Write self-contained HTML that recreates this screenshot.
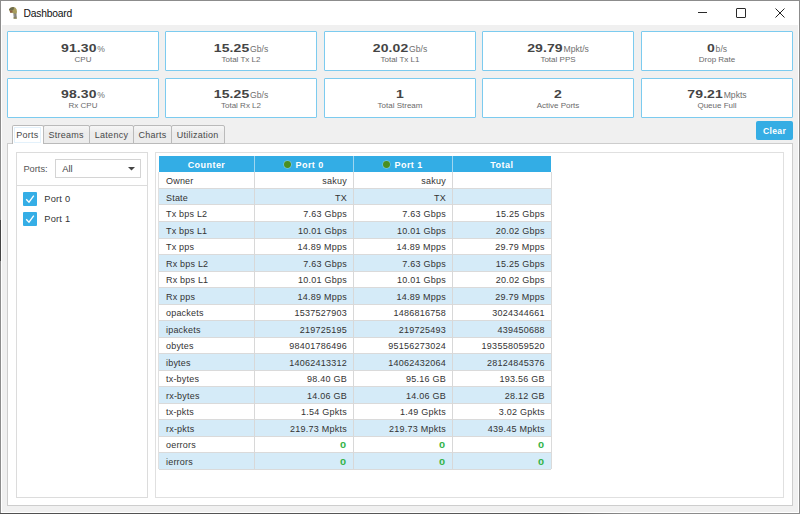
<!DOCTYPE html>
<html><head><meta charset="utf-8"><style>
html,body{margin:0;padding:0;width:800px;height:514px;overflow:hidden;background:#f0f0f0;}
body{position:relative;font-family:"Liberation Sans", sans-serif;}
.b{position:absolute;}
.t{position:absolute;white-space:nowrap;line-height:1;}
</style></head><body>
<div class="b" style="left:0px;top:0px;width:800px;height:514px;background:#f0f0f0"></div>
<div class="b" style="left:1px;top:1px;width:798px;height:24px;background:#fff"></div>
<div class="b" style="left:0px;top:0px;width:800px;height:1px;background:#8c8c8c"></div>
<div class="b" style="left:0px;top:0px;width:1px;height:514px;background:#8c8c8c"></div>
<div class="b" style="left:799px;top:0px;width:1px;height:514px;background:#8c8c8c"></div>
<div class="b" style="left:0px;top:513px;width:800px;height:1px;background:linear-gradient(90deg,#505050,#5a5a5a 70%,#8c8c8c 78%)"></div>
<div class="b" style="left:0px;top:220px;width:1px;height:41px;background:#444"></div>
<div class="b" style="left:64px;top:512px;width:3px;height:1px;background:#888"></div>
<div class="b" style="left:203px;top:512px;width:3px;height:1px;background:#888"></div>
<div class="b" style="left:278px;top:512px;width:3px;height:1px;background:#888"></div>
<div class="b" style="left:333px;top:512px;width:3px;height:1px;background:#888"></div>
<div class="b" style="left:495px;top:512px;width:3px;height:1px;background:#888"></div>
<div class="b" style="left:1px;top:25px;width:1px;height:488px;background:#fff"></div>
<div class="b" style="left:798px;top:25px;width:1px;height:488px;background:#fff"></div>
<div class="b" style="left:1px;top:512px;width:798px;height:1px;background:#fff"></div>
<svg class="b" style="left:7px;top:5px" width="12" height="15" viewBox="0 0 12 15">
<path d="M2 4.2 L3.5 2.8 L6 2 L8.2 2.4 L9.6 4.2 L10 7 L9.4 9.2 L8 9.6 L6.4 8.6 L5 7.8 L3.4 8 L2.8 6.6 Z" fill="#a79c5c"/>
<path d="M2 4.2 L3.5 2.8 L6 2 L7.2 2.6 L6.6 4.6 L5.2 5.4 L3.2 5.6 L2.2 5.2 Z" fill="#6e6c4c"/>
<path d="M2.8 5.6 L5.4 5.6 L5.6 7.2 L4.2 7.8 L3.2 7.6 Z" fill="#8c5c44"/>
<path d="M6.4 8.4 L9.4 8.8 L9.8 12.4 L8.6 13.6 L6.8 13.2 L6.6 11 Z" fill="#807f7a"/>
<path d="M7.4 9 L8.2 9 L8.2 12 L7.4 12 Z" fill="#9c9a94"/>
<path d="M6.4 12.6 L9.8 12.4 L10 13.8 L6.6 13.8 Z" fill="#8b8450"/>
</svg>
<div class="t" style="left:23.6px;top:8.58px;font-size:10.3px;color:#111;font-weight:normal;letter-spacing:-0.22px;">Dashboard</div>
<div class="b" style="left:698px;top:12px;width:8.5px;height:1.2px;background:#2a2a2a"></div>
<div class="b" style="left:736px;top:8px;width:9.5px;height:9.5px;border:1.2px solid #2a2a2a;box-sizing:border-box;border-radius:1px"></div>
<svg class="b" style="left:774px;top:7px" width="12" height="12" viewBox="0 0 12 12"><path d="M1.5 1.5 L10.5 10.5 M10.5 1.5 L1.5 10.5" stroke="#222" stroke-width="1"/></svg>
<div class="b" style="left:7px;top:31px;width:152px;height:40px;border:1px solid #7ccbef;background:#fff;box-sizing:border-box;border-radius:1px"></div>
<div class="t" style="left:7px;top:39.52px;width:152px;text-align:center;font-size:11.2px;color:#444;font-weight:bold;letter-spacing:0px;"><span style="display:inline-block;font-size:14px;line-height:1;transform:scaleY(0.84);transform-origin:50% 11.85px;letter-spacing:0.1px">91.30</span><span style="font-size:8.6px;font-weight:normal;color:#6f6f6f;letter-spacing:0;margin-left:0.8px">%</span></div>
<div class="t" style="left:7px;top:55.93px;width:152px;text-align:center;font-size:8px;color:#6a6a6a;font-weight:normal;letter-spacing:0px;">CPU</div>
<div class="b" style="left:165px;top:31px;width:152px;height:40px;border:1px solid #7ccbef;background:#fff;box-sizing:border-box;border-radius:1px"></div>
<div class="t" style="left:165px;top:39.52px;width:152px;text-align:center;font-size:11.2px;color:#444;font-weight:bold;letter-spacing:0px;"><span style="display:inline-block;font-size:14px;line-height:1;transform:scaleY(0.84);transform-origin:50% 11.85px;letter-spacing:0.1px">15.25</span><span style="font-size:8.6px;font-weight:normal;color:#6f6f6f;letter-spacing:0;margin-left:0.8px">Gb/s</span></div>
<div class="t" style="left:165px;top:55.93px;width:152px;text-align:center;font-size:8px;color:#6a6a6a;font-weight:normal;letter-spacing:0px;">Total Tx L2</div>
<div class="b" style="left:324px;top:31px;width:152px;height:40px;border:1px solid #7ccbef;background:#fff;box-sizing:border-box;border-radius:1px"></div>
<div class="t" style="left:324px;top:39.52px;width:152px;text-align:center;font-size:11.2px;color:#444;font-weight:bold;letter-spacing:0px;"><span style="display:inline-block;font-size:14px;line-height:1;transform:scaleY(0.84);transform-origin:50% 11.85px;letter-spacing:0.1px">20.02</span><span style="font-size:8.6px;font-weight:normal;color:#6f6f6f;letter-spacing:0;margin-left:0.8px">Gb/s</span></div>
<div class="t" style="left:324px;top:55.93px;width:152px;text-align:center;font-size:8px;color:#6a6a6a;font-weight:normal;letter-spacing:0px;">Total Tx L1</div>
<div class="b" style="left:482px;top:31px;width:152px;height:40px;border:1px solid #7ccbef;background:#fff;box-sizing:border-box;border-radius:1px"></div>
<div class="t" style="left:482px;top:39.52px;width:152px;text-align:center;font-size:11.2px;color:#444;font-weight:bold;letter-spacing:0px;"><span style="display:inline-block;font-size:14px;line-height:1;transform:scaleY(0.84);transform-origin:50% 11.85px;letter-spacing:0.1px">29.79</span><span style="font-size:8.6px;font-weight:normal;color:#6f6f6f;letter-spacing:0;margin-left:0.8px">Mpkt/s</span></div>
<div class="t" style="left:482px;top:55.93px;width:152px;text-align:center;font-size:8px;color:#6a6a6a;font-weight:normal;letter-spacing:0px;">Total PPS</div>
<div class="b" style="left:641px;top:31px;width:152px;height:40px;border:1px solid #7ccbef;background:#fff;box-sizing:border-box;border-radius:1px"></div>
<div class="t" style="left:641px;top:39.52px;width:152px;text-align:center;font-size:11.2px;color:#444;font-weight:bold;letter-spacing:0px;"><span style="display:inline-block;font-size:14px;line-height:1;transform:scaleY(0.84);transform-origin:50% 11.85px;letter-spacing:0.1px">0</span><span style="font-size:8.6px;font-weight:normal;color:#6f6f6f;letter-spacing:0;margin-left:0.8px">b/s</span></div>
<div class="t" style="left:641px;top:55.93px;width:152px;text-align:center;font-size:8px;color:#6a6a6a;font-weight:normal;letter-spacing:0px;">Drop Rate</div>
<div class="b" style="left:7px;top:77.6px;width:152px;height:40px;border:1px solid #7ccbef;background:#fff;box-sizing:border-box;border-radius:1px"></div>
<div class="t" style="left:7px;top:85.52px;width:152px;text-align:center;font-size:11.2px;color:#444;font-weight:bold;letter-spacing:0px;"><span style="display:inline-block;font-size:14px;line-height:1;transform:scaleY(0.84);transform-origin:50% 11.85px;letter-spacing:0.1px">98.30</span><span style="font-size:8.6px;font-weight:normal;color:#6f6f6f;letter-spacing:0;margin-left:0.8px">%</span></div>
<div class="t" style="left:7px;top:101.93px;width:152px;text-align:center;font-size:8px;color:#6a6a6a;font-weight:normal;letter-spacing:0px;">Rx CPU</div>
<div class="b" style="left:165px;top:77.6px;width:152px;height:40px;border:1px solid #7ccbef;background:#fff;box-sizing:border-box;border-radius:1px"></div>
<div class="t" style="left:165px;top:85.52px;width:152px;text-align:center;font-size:11.2px;color:#444;font-weight:bold;letter-spacing:0px;"><span style="display:inline-block;font-size:14px;line-height:1;transform:scaleY(0.84);transform-origin:50% 11.85px;letter-spacing:0.1px">15.25</span><span style="font-size:8.6px;font-weight:normal;color:#6f6f6f;letter-spacing:0;margin-left:0.8px">Gb/s</span></div>
<div class="t" style="left:165px;top:101.93px;width:152px;text-align:center;font-size:8px;color:#6a6a6a;font-weight:normal;letter-spacing:0px;">Total Rx L2</div>
<div class="b" style="left:324px;top:77.6px;width:152px;height:40px;border:1px solid #7ccbef;background:#fff;box-sizing:border-box;border-radius:1px"></div>
<div class="t" style="left:324px;top:85.52px;width:152px;text-align:center;font-size:11.2px;color:#444;font-weight:bold;letter-spacing:0px;"><span style="display:inline-block;font-size:14px;line-height:1;transform:scaleY(0.84);transform-origin:50% 11.85px;letter-spacing:0.1px">1</span></div>
<div class="t" style="left:324px;top:101.93px;width:152px;text-align:center;font-size:8px;color:#6a6a6a;font-weight:normal;letter-spacing:0px;">Total Stream</div>
<div class="b" style="left:482px;top:77.6px;width:152px;height:40px;border:1px solid #7ccbef;background:#fff;box-sizing:border-box;border-radius:1px"></div>
<div class="t" style="left:482px;top:85.52px;width:152px;text-align:center;font-size:11.2px;color:#444;font-weight:bold;letter-spacing:0px;"><span style="display:inline-block;font-size:14px;line-height:1;transform:scaleY(0.84);transform-origin:50% 11.85px;letter-spacing:0.1px">2</span></div>
<div class="t" style="left:482px;top:101.93px;width:152px;text-align:center;font-size:8px;color:#6a6a6a;font-weight:normal;letter-spacing:0px;">Active Ports</div>
<div class="b" style="left:641px;top:77.6px;width:152px;height:40px;border:1px solid #7ccbef;background:#fff;box-sizing:border-box;border-radius:1px"></div>
<div class="t" style="left:641px;top:85.52px;width:152px;text-align:center;font-size:11.2px;color:#444;font-weight:bold;letter-spacing:0px;"><span style="display:inline-block;font-size:14px;line-height:1;transform:scaleY(0.84);transform-origin:50% 11.85px;letter-spacing:0.1px">79.21</span><span style="font-size:8.6px;font-weight:normal;color:#6f6f6f;letter-spacing:0;margin-left:0.8px">Mpkts</span></div>
<div class="t" style="left:641px;top:101.93px;width:152px;text-align:center;font-size:8px;color:#6a6a6a;font-weight:normal;letter-spacing:0px;">Queue Full</div>
<div class="b" style="left:7px;top:143px;width:786px;height:362.5px;border:1px solid #cdcdcd;background:#fff;box-sizing:border-box"></div>
<div class="b" style="left:11.5px;top:124.6px;width:32.0px;height:19.4px;border:1px solid #bababa;border-bottom:none;background:#fff;box-sizing:border-box;border-radius:2px 2px 0 0"></div>
<div class="b" style="left:14px;top:127.3px;width:26.5px;height:16px;border:1px solid #e3f1fb;box-sizing:border-box"></div>
<div class="t" style="left:11.5px;top:131.18px;width:32.0px;text-align:center;font-size:9px;color:#484848;font-weight:normal;letter-spacing:0.25px;">Ports</div>
<div class="b" style="left:42.5px;top:125.2px;width:47.5px;height:18.8px;border:1px solid #bababa;background:linear-gradient(#f6f6f6,#ececec 40%);box-sizing:border-box;border-radius:2px 2px 0 0"></div>
<div class="t" style="left:42.5px;top:131.18px;width:47.5px;text-align:center;font-size:9px;color:#484848;font-weight:normal;letter-spacing:0.25px;">Streams</div>
<div class="b" style="left:89px;top:125.2px;width:45px;height:18.8px;border:1px solid #bababa;background:linear-gradient(#f6f6f6,#ececec 40%);box-sizing:border-box;border-radius:2px 2px 0 0"></div>
<div class="t" style="left:89px;top:131.18px;width:45px;text-align:center;font-size:9px;color:#484848;font-weight:normal;letter-spacing:0.25px;">Latency</div>
<div class="b" style="left:133px;top:125.2px;width:39px;height:18.8px;border:1px solid #bababa;background:linear-gradient(#f6f6f6,#ececec 40%);box-sizing:border-box;border-radius:2px 2px 0 0"></div>
<div class="t" style="left:133px;top:131.18px;width:39px;text-align:center;font-size:9px;color:#484848;font-weight:normal;letter-spacing:0.25px;">Charts</div>
<div class="b" style="left:171px;top:125.2px;width:53.5px;height:18.8px;border:1px solid #bababa;background:linear-gradient(#f6f6f6,#ececec 40%);box-sizing:border-box;border-radius:2px 2px 0 0"></div>
<div class="t" style="left:171px;top:131.18px;width:53.5px;text-align:center;font-size:9px;color:#484848;font-weight:normal;letter-spacing:0.25px;">Utilization</div>
<div class="b" style="left:756.3px;top:121.3px;width:36.5px;height:18.4px;background:#35ade4;border-radius:2px"></div>
<div class="t" style="left:756.3px;top:126.82px;width:36.5px;text-align:center;font-size:8.6px;color:#fff;font-weight:bold;letter-spacing:0.3px;">Clear</div>
<div class="b" style="left:16px;top:152px;width:131.5px;height:345.5px;border:1px solid #dcdcdc;box-sizing:border-box"></div>
<div class="b" style="left:16px;top:184.6px;width:131.5px;height:1px;background:#dcdcdc"></div>
<div class="t" style="left:23.4px;top:164.73px;font-size:9.3px;color:#555;font-weight:normal;letter-spacing:0px;">Ports:</div>
<div class="b" style="left:55.2px;top:159.4px;width:85.7px;height:18.3px;border:1px solid #d4d4d4;box-sizing:border-box;background:#fff"></div>
<div class="t" style="left:62.2px;top:164.73px;font-size:9.3px;color:#444;font-weight:normal;letter-spacing:0px;">All</div>
<svg class="b" style="left:127.5px;top:166.5px" width="7" height="4" viewBox="0 0 7 4"><path d="M0 0 L7 0 L3.5 3.5 Z" fill="#444"/></svg>
<div class="b" style="left:23.1px;top:192px;width:13.7px;height:14px;background:#35aee6;border-radius:1px"></div>
<svg class="b" style="left:23.1px;top:192px" width="14" height="14" viewBox="0 0 14 14"><path d="M3.2 7.2 L6 10.2 L10.8 3.6" stroke="#fff" stroke-width="1.3" fill="none"/></svg>
<div class="t" style="left:44.3px;top:194.93px;font-size:9.3px;color:#333;font-weight:normal;letter-spacing:0.2px;">Port 0</div>
<div class="b" style="left:23.1px;top:212.4px;width:13.7px;height:14px;background:#35aee6;border-radius:1px"></div>
<svg class="b" style="left:23.1px;top:212.4px" width="14" height="14" viewBox="0 0 14 14"><path d="M3.2 7.2 L6 10.2 L10.8 3.6" stroke="#fff" stroke-width="1.3" fill="none"/></svg>
<div class="t" style="left:44.3px;top:215.33px;font-size:9.3px;color:#333;font-weight:normal;letter-spacing:0.2px;">Port 1</div>
<div class="b" style="left:154.5px;top:152px;width:629.5px;height:345.5px;border:1px solid #e0e0e0;box-sizing:border-box"></div>
<div class="b" style="left:158.5px;top:156.1px;width:392.70000000000005px;height:15.830000000000013px;background:#33ade5"></div>
<div class="b" style="left:254.0px;top:156.1px;width:1px;height:15.830000000000013px;background:#9fd6f0"></div>
<div class="b" style="left:353.0px;top:156.1px;width:1px;height:15.830000000000013px;background:#9fd6f0"></div>
<div class="b" style="left:452.0px;top:156.1px;width:1px;height:15.830000000000013px;background:#9fd6f0"></div>
<div class="t" style="left:158.5px;top:160.58px;width:96.0px;text-align:center;font-size:9px;color:#fff;font-weight:bold;letter-spacing:0.45px;">Counter</div>
<div class="t" style="left:254.5px;top:160.58px;width:99.0px;text-align:center;font-size:9px;color:#fff;font-weight:bold;letter-spacing:0.45px;"><span style="display:inline-block;width:6.8px;height:6.8px;border-radius:50%;background:#4a8f22;box-shadow:0 0 0 0.5px rgba(230,240,210,0.55);margin-right:4.4px;vertical-align:-0.3px"></span>Port 0</div>
<div class="t" style="left:353.5px;top:160.58px;width:99.0px;text-align:center;font-size:9px;color:#fff;font-weight:bold;letter-spacing:0.45px;"><span style="display:inline-block;width:6.8px;height:6.8px;border-radius:50%;background:#4a8f22;box-shadow:0 0 0 0.5px rgba(230,240,210,0.55);margin-right:4.4px;vertical-align:-0.3px"></span>Port 1</div>
<div class="t" style="left:452.5px;top:160.58px;width:98.70000000000005px;text-align:center;font-size:9px;color:#fff;font-weight:bold;letter-spacing:0.45px;">Total</div>
<div class="b" style="left:158.5px;top:171.93px;width:392.70000000000005px;height:16.53px;background:#fff"></div>
<div class="b" style="left:158.5px;top:188.46px;width:392.70000000000005px;height:16.53px;background:#d5ebf8"></div>
<div class="b" style="left:158.5px;top:204.99px;width:392.70000000000005px;height:16.53px;background:#fff"></div>
<div class="b" style="left:158.5px;top:221.52px;width:392.70000000000005px;height:16.53px;background:#d5ebf8"></div>
<div class="b" style="left:158.5px;top:238.05px;width:392.70000000000005px;height:16.53px;background:#fff"></div>
<div class="b" style="left:158.5px;top:254.58px;width:392.70000000000005px;height:16.53px;background:#d5ebf8"></div>
<div class="b" style="left:158.5px;top:271.11px;width:392.70000000000005px;height:16.53px;background:#fff"></div>
<div class="b" style="left:158.5px;top:287.64px;width:392.70000000000005px;height:16.53px;background:#d5ebf8"></div>
<div class="b" style="left:158.5px;top:304.17px;width:392.70000000000005px;height:16.53px;background:#fff"></div>
<div class="b" style="left:158.5px;top:320.70000000000005px;width:392.70000000000005px;height:16.53px;background:#d5ebf8"></div>
<div class="b" style="left:158.5px;top:337.23px;width:392.70000000000005px;height:16.53px;background:#fff"></div>
<div class="b" style="left:158.5px;top:353.76px;width:392.70000000000005px;height:16.53px;background:#d5ebf8"></div>
<div class="b" style="left:158.5px;top:370.29px;width:392.70000000000005px;height:16.53px;background:#fff"></div>
<div class="b" style="left:158.5px;top:386.82000000000005px;width:392.70000000000005px;height:16.53px;background:#d5ebf8"></div>
<div class="b" style="left:158.5px;top:403.35px;width:392.70000000000005px;height:16.53px;background:#fff"></div>
<div class="b" style="left:158.5px;top:419.88px;width:392.70000000000005px;height:16.53px;background:#d5ebf8"></div>
<div class="b" style="left:158.5px;top:436.40999999999997px;width:392.70000000000005px;height:16.53px;background:#fff"></div>
<div class="b" style="left:158.5px;top:452.94000000000005px;width:392.70000000000005px;height:16.53px;background:#d5ebf8"></div>
<div class="b" style="left:158.5px;top:187.96px;width:392.70000000000005px;height:1px;background:#dadada"></div>
<div class="b" style="left:158.5px;top:204.49px;width:392.70000000000005px;height:1px;background:#dadada"></div>
<div class="b" style="left:158.5px;top:221.02px;width:392.70000000000005px;height:1px;background:#dadada"></div>
<div class="b" style="left:158.5px;top:237.55px;width:392.70000000000005px;height:1px;background:#dadada"></div>
<div class="b" style="left:158.5px;top:254.08px;width:392.70000000000005px;height:1px;background:#dadada"></div>
<div class="b" style="left:158.5px;top:270.61px;width:392.70000000000005px;height:1px;background:#dadada"></div>
<div class="b" style="left:158.5px;top:287.14px;width:392.70000000000005px;height:1px;background:#dadada"></div>
<div class="b" style="left:158.5px;top:303.66999999999996px;width:392.70000000000005px;height:1px;background:#dadada"></div>
<div class="b" style="left:158.5px;top:320.20000000000005px;width:392.70000000000005px;height:1px;background:#dadada"></div>
<div class="b" style="left:158.5px;top:336.73px;width:392.70000000000005px;height:1px;background:#dadada"></div>
<div class="b" style="left:158.5px;top:353.26px;width:392.70000000000005px;height:1px;background:#dadada"></div>
<div class="b" style="left:158.5px;top:369.78999999999996px;width:392.70000000000005px;height:1px;background:#dadada"></div>
<div class="b" style="left:158.5px;top:386.32000000000005px;width:392.70000000000005px;height:1px;background:#dadada"></div>
<div class="b" style="left:158.5px;top:402.85px;width:392.70000000000005px;height:1px;background:#dadada"></div>
<div class="b" style="left:158.5px;top:419.38px;width:392.70000000000005px;height:1px;background:#dadada"></div>
<div class="b" style="left:158.5px;top:435.90999999999997px;width:392.70000000000005px;height:1px;background:#dadada"></div>
<div class="b" style="left:158.5px;top:452.43999999999994px;width:392.70000000000005px;height:1px;background:#dadada"></div>
<div class="b" style="left:158.5px;top:468.97px;width:392.70000000000005px;height:1px;background:#dadada"></div>
<div class="b" style="left:254.0px;top:171.93px;width:1px;height:297.54px;background:#d8d8d8"></div>
<div class="b" style="left:353.0px;top:171.93px;width:1px;height:297.54px;background:#d8d8d8"></div>
<div class="b" style="left:452.0px;top:171.93px;width:1px;height:297.54px;background:#d8d8d8"></div>
<div class="b" style="left:158.0px;top:171.93px;width:1px;height:297.54px;background:#e0e0e0"></div>
<div class="b" style="left:550.7px;top:171.93px;width:1px;height:297.54px;background:#dadada"></div>
<div class="t" style="left:166.0px;top:177.01px;font-size:9px;color:#333;font-weight:normal;letter-spacing:0.2px;">Owner</div>
<div class="t" style="left:254.5px;top:177.01px;width:92.5px;text-align:right;font-size:9px;color:#333;font-weight:normal;letter-spacing:0.25px;margin-right:-0.25px">sakuy</div>
<div class="t" style="left:353.5px;top:177.01px;width:92.5px;text-align:right;font-size:9px;color:#333;font-weight:normal;letter-spacing:0.25px;margin-right:-0.25px">sakuy</div>
<div class="t" style="left:452.5px;top:177.01px;width:92.20000000000005px;text-align:right;font-size:9px;color:#333;font-weight:normal;letter-spacing:0.25px;margin-right:-0.25px"></div>
<div class="t" style="left:166.0px;top:193.54px;font-size:9px;color:#333;font-weight:normal;letter-spacing:0.2px;">State</div>
<div class="t" style="left:254.5px;top:193.54px;width:92.5px;text-align:right;font-size:9px;color:#333;font-weight:normal;letter-spacing:0.25px;margin-right:-0.25px">TX</div>
<div class="t" style="left:353.5px;top:193.54px;width:92.5px;text-align:right;font-size:9px;color:#333;font-weight:normal;letter-spacing:0.25px;margin-right:-0.25px">TX</div>
<div class="t" style="left:452.5px;top:193.54px;width:92.20000000000005px;text-align:right;font-size:9px;color:#333;font-weight:normal;letter-spacing:0.25px;margin-right:-0.25px"></div>
<div class="t" style="left:166.0px;top:210.07px;font-size:9px;color:#333;font-weight:normal;letter-spacing:0.2px;">Tx bps L2</div>
<div class="t" style="left:254.5px;top:210.07px;width:92.5px;text-align:right;font-size:9px;color:#333;font-weight:normal;letter-spacing:0.25px;margin-right:-0.25px">7.63 Gbps</div>
<div class="t" style="left:353.5px;top:210.07px;width:92.5px;text-align:right;font-size:9px;color:#333;font-weight:normal;letter-spacing:0.25px;margin-right:-0.25px">7.63 Gbps</div>
<div class="t" style="left:452.5px;top:210.07px;width:92.20000000000005px;text-align:right;font-size:9px;color:#333;font-weight:normal;letter-spacing:0.25px;margin-right:-0.25px">15.25 Gbps</div>
<div class="t" style="left:166.0px;top:226.60px;font-size:9px;color:#333;font-weight:normal;letter-spacing:0.2px;">Tx bps L1</div>
<div class="t" style="left:254.5px;top:226.60px;width:92.5px;text-align:right;font-size:9px;color:#333;font-weight:normal;letter-spacing:0.25px;margin-right:-0.25px">10.01 Gbps</div>
<div class="t" style="left:353.5px;top:226.60px;width:92.5px;text-align:right;font-size:9px;color:#333;font-weight:normal;letter-spacing:0.25px;margin-right:-0.25px">10.01 Gbps</div>
<div class="t" style="left:452.5px;top:226.60px;width:92.20000000000005px;text-align:right;font-size:9px;color:#333;font-weight:normal;letter-spacing:0.25px;margin-right:-0.25px">20.02 Gbps</div>
<div class="t" style="left:166.0px;top:243.13px;font-size:9px;color:#333;font-weight:normal;letter-spacing:0.2px;">Tx pps</div>
<div class="t" style="left:254.5px;top:243.13px;width:92.5px;text-align:right;font-size:9px;color:#333;font-weight:normal;letter-spacing:0.25px;margin-right:-0.25px">14.89 Mpps</div>
<div class="t" style="left:353.5px;top:243.13px;width:92.5px;text-align:right;font-size:9px;color:#333;font-weight:normal;letter-spacing:0.25px;margin-right:-0.25px">14.89 Mpps</div>
<div class="t" style="left:452.5px;top:243.13px;width:92.20000000000005px;text-align:right;font-size:9px;color:#333;font-weight:normal;letter-spacing:0.25px;margin-right:-0.25px">29.79 Mpps</div>
<div class="t" style="left:166.0px;top:259.66px;font-size:9px;color:#333;font-weight:normal;letter-spacing:0.2px;">Rx bps L2</div>
<div class="t" style="left:254.5px;top:259.66px;width:92.5px;text-align:right;font-size:9px;color:#333;font-weight:normal;letter-spacing:0.25px;margin-right:-0.25px">7.63 Gbps</div>
<div class="t" style="left:353.5px;top:259.66px;width:92.5px;text-align:right;font-size:9px;color:#333;font-weight:normal;letter-spacing:0.25px;margin-right:-0.25px">7.63 Gbps</div>
<div class="t" style="left:452.5px;top:259.66px;width:92.20000000000005px;text-align:right;font-size:9px;color:#333;font-weight:normal;letter-spacing:0.25px;margin-right:-0.25px">15.25 Gbps</div>
<div class="t" style="left:166.0px;top:276.19px;font-size:9px;color:#333;font-weight:normal;letter-spacing:0.2px;">Rx bps L1</div>
<div class="t" style="left:254.5px;top:276.19px;width:92.5px;text-align:right;font-size:9px;color:#333;font-weight:normal;letter-spacing:0.25px;margin-right:-0.25px">10.01 Gbps</div>
<div class="t" style="left:353.5px;top:276.19px;width:92.5px;text-align:right;font-size:9px;color:#333;font-weight:normal;letter-spacing:0.25px;margin-right:-0.25px">10.01 Gbps</div>
<div class="t" style="left:452.5px;top:276.19px;width:92.20000000000005px;text-align:right;font-size:9px;color:#333;font-weight:normal;letter-spacing:0.25px;margin-right:-0.25px">20.02 Gbps</div>
<div class="t" style="left:166.0px;top:292.72px;font-size:9px;color:#333;font-weight:normal;letter-spacing:0.2px;">Rx pps</div>
<div class="t" style="left:254.5px;top:292.72px;width:92.5px;text-align:right;font-size:9px;color:#333;font-weight:normal;letter-spacing:0.25px;margin-right:-0.25px">14.89 Mpps</div>
<div class="t" style="left:353.5px;top:292.72px;width:92.5px;text-align:right;font-size:9px;color:#333;font-weight:normal;letter-spacing:0.25px;margin-right:-0.25px">14.89 Mpps</div>
<div class="t" style="left:452.5px;top:292.72px;width:92.20000000000005px;text-align:right;font-size:9px;color:#333;font-weight:normal;letter-spacing:0.25px;margin-right:-0.25px">29.79 Mpps</div>
<div class="t" style="left:166.0px;top:309.25px;font-size:9px;color:#333;font-weight:normal;letter-spacing:0.2px;">opackets</div>
<div class="t" style="left:254.5px;top:309.25px;width:92.5px;text-align:right;font-size:9px;color:#333;font-weight:normal;letter-spacing:0.25px;margin-right:-0.25px">1537527903</div>
<div class="t" style="left:353.5px;top:309.25px;width:92.5px;text-align:right;font-size:9px;color:#333;font-weight:normal;letter-spacing:0.25px;margin-right:-0.25px">1486816758</div>
<div class="t" style="left:452.5px;top:309.25px;width:92.20000000000005px;text-align:right;font-size:9px;color:#333;font-weight:normal;letter-spacing:0.25px;margin-right:-0.25px">3024344661</div>
<div class="t" style="left:166.0px;top:325.78px;font-size:9px;color:#333;font-weight:normal;letter-spacing:0.2px;">ipackets</div>
<div class="t" style="left:254.5px;top:325.78px;width:92.5px;text-align:right;font-size:9px;color:#333;font-weight:normal;letter-spacing:0.25px;margin-right:-0.25px">219725195</div>
<div class="t" style="left:353.5px;top:325.78px;width:92.5px;text-align:right;font-size:9px;color:#333;font-weight:normal;letter-spacing:0.25px;margin-right:-0.25px">219725493</div>
<div class="t" style="left:452.5px;top:325.78px;width:92.20000000000005px;text-align:right;font-size:9px;color:#333;font-weight:normal;letter-spacing:0.25px;margin-right:-0.25px">439450688</div>
<div class="t" style="left:166.0px;top:342.31px;font-size:9px;color:#333;font-weight:normal;letter-spacing:0.2px;">obytes</div>
<div class="t" style="left:254.5px;top:342.31px;width:92.5px;text-align:right;font-size:9px;color:#333;font-weight:normal;letter-spacing:0.25px;margin-right:-0.25px">98401786496</div>
<div class="t" style="left:353.5px;top:342.31px;width:92.5px;text-align:right;font-size:9px;color:#333;font-weight:normal;letter-spacing:0.25px;margin-right:-0.25px">95156273024</div>
<div class="t" style="left:452.5px;top:342.31px;width:92.20000000000005px;text-align:right;font-size:9px;color:#333;font-weight:normal;letter-spacing:0.25px;margin-right:-0.25px">193558059520</div>
<div class="t" style="left:166.0px;top:358.84px;font-size:9px;color:#333;font-weight:normal;letter-spacing:0.2px;">ibytes</div>
<div class="t" style="left:254.5px;top:358.84px;width:92.5px;text-align:right;font-size:9px;color:#333;font-weight:normal;letter-spacing:0.25px;margin-right:-0.25px">14062413312</div>
<div class="t" style="left:353.5px;top:358.84px;width:92.5px;text-align:right;font-size:9px;color:#333;font-weight:normal;letter-spacing:0.25px;margin-right:-0.25px">14062432064</div>
<div class="t" style="left:452.5px;top:358.84px;width:92.20000000000005px;text-align:right;font-size:9px;color:#333;font-weight:normal;letter-spacing:0.25px;margin-right:-0.25px">28124845376</div>
<div class="t" style="left:166.0px;top:375.37px;font-size:9px;color:#333;font-weight:normal;letter-spacing:0.2px;">tx-bytes</div>
<div class="t" style="left:254.5px;top:375.37px;width:92.5px;text-align:right;font-size:9px;color:#333;font-weight:normal;letter-spacing:0.25px;margin-right:-0.25px">98.40 GB</div>
<div class="t" style="left:353.5px;top:375.37px;width:92.5px;text-align:right;font-size:9px;color:#333;font-weight:normal;letter-spacing:0.25px;margin-right:-0.25px">95.16 GB</div>
<div class="t" style="left:452.5px;top:375.37px;width:92.20000000000005px;text-align:right;font-size:9px;color:#333;font-weight:normal;letter-spacing:0.25px;margin-right:-0.25px">193.56 GB</div>
<div class="t" style="left:166.0px;top:391.90px;font-size:9px;color:#333;font-weight:normal;letter-spacing:0.2px;">rx-bytes</div>
<div class="t" style="left:254.5px;top:391.90px;width:92.5px;text-align:right;font-size:9px;color:#333;font-weight:normal;letter-spacing:0.25px;margin-right:-0.25px">14.06 GB</div>
<div class="t" style="left:353.5px;top:391.90px;width:92.5px;text-align:right;font-size:9px;color:#333;font-weight:normal;letter-spacing:0.25px;margin-right:-0.25px">14.06 GB</div>
<div class="t" style="left:452.5px;top:391.90px;width:92.20000000000005px;text-align:right;font-size:9px;color:#333;font-weight:normal;letter-spacing:0.25px;margin-right:-0.25px">28.12 GB</div>
<div class="t" style="left:166.0px;top:408.43px;font-size:9px;color:#333;font-weight:normal;letter-spacing:0.2px;">tx-pkts</div>
<div class="t" style="left:254.5px;top:408.43px;width:92.5px;text-align:right;font-size:9px;color:#333;font-weight:normal;letter-spacing:0.25px;margin-right:-0.25px">1.54 Gpkts</div>
<div class="t" style="left:353.5px;top:408.43px;width:92.5px;text-align:right;font-size:9px;color:#333;font-weight:normal;letter-spacing:0.25px;margin-right:-0.25px">1.49 Gpkts</div>
<div class="t" style="left:452.5px;top:408.43px;width:92.20000000000005px;text-align:right;font-size:9px;color:#333;font-weight:normal;letter-spacing:0.25px;margin-right:-0.25px">3.02 Gpkts</div>
<div class="t" style="left:166.0px;top:424.96px;font-size:9px;color:#333;font-weight:normal;letter-spacing:0.2px;">rx-pkts</div>
<div class="t" style="left:254.5px;top:424.96px;width:92.5px;text-align:right;font-size:9px;color:#333;font-weight:normal;letter-spacing:0.25px;margin-right:-0.25px">219.73 Mpkts</div>
<div class="t" style="left:353.5px;top:424.96px;width:92.5px;text-align:right;font-size:9px;color:#333;font-weight:normal;letter-spacing:0.25px;margin-right:-0.25px">219.73 Mpkts</div>
<div class="t" style="left:452.5px;top:424.96px;width:92.20000000000005px;text-align:right;font-size:9px;color:#333;font-weight:normal;letter-spacing:0.25px;margin-right:-0.25px">439.45 Mpkts</div>
<div class="t" style="left:166.0px;top:441.49px;font-size:9px;color:#333;font-weight:normal;letter-spacing:0.2px;">oerrors</div>
<div class="t" style="left:254.5px;top:441.49px;width:92.0px;text-align:right;font-size:9px;color:#35b44a;font-weight:bold;letter-spacing:0px;"><span style="display:inline-block;transform:scaleX(1.22);transform-origin:100% 50%">0</span></div>
<div class="t" style="left:353.5px;top:441.49px;width:92.0px;text-align:right;font-size:9px;color:#35b44a;font-weight:bold;letter-spacing:0px;"><span style="display:inline-block;transform:scaleX(1.22);transform-origin:100% 50%">0</span></div>
<div class="t" style="left:452.5px;top:441.49px;width:91.70000000000005px;text-align:right;font-size:9px;color:#35b44a;font-weight:bold;letter-spacing:0px;"><span style="display:inline-block;transform:scaleX(1.22);transform-origin:100% 50%">0</span></div>
<div class="t" style="left:166.0px;top:458.02px;font-size:9px;color:#333;font-weight:normal;letter-spacing:0.2px;">ierrors</div>
<div class="t" style="left:254.5px;top:458.02px;width:92.0px;text-align:right;font-size:9px;color:#35b44a;font-weight:bold;letter-spacing:0px;"><span style="display:inline-block;transform:scaleX(1.22);transform-origin:100% 50%">0</span></div>
<div class="t" style="left:353.5px;top:458.02px;width:92.0px;text-align:right;font-size:9px;color:#35b44a;font-weight:bold;letter-spacing:0px;"><span style="display:inline-block;transform:scaleX(1.22);transform-origin:100% 50%">0</span></div>
<div class="t" style="left:452.5px;top:458.02px;width:91.70000000000005px;text-align:right;font-size:9px;color:#35b44a;font-weight:bold;letter-spacing:0px;"><span style="display:inline-block;transform:scaleX(1.22);transform-origin:100% 50%">0</span></div>
</body></html>
